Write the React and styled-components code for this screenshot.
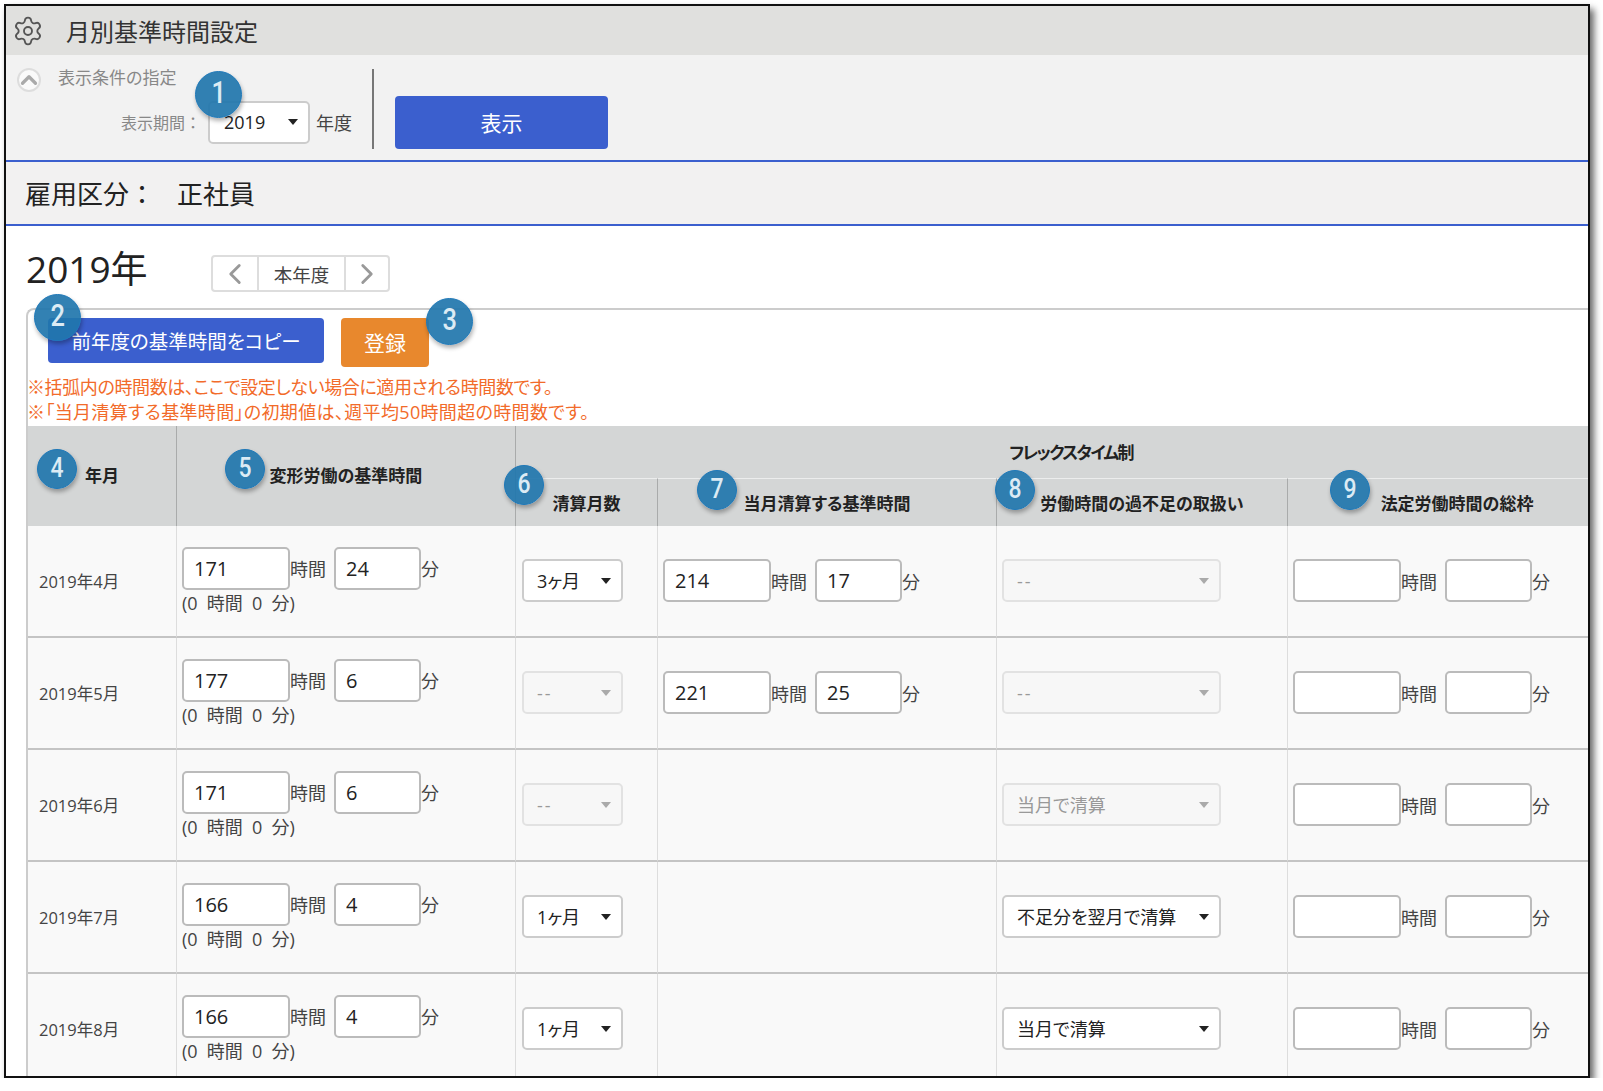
import React from 'react'
import styled, { createGlobalStyle } from 'styled-components'
import { Settings, ChevronUp, ChevronLeft, ChevronRight } from 'lucide-react'

const rows = [
  { month: '2019年4月', hour: '171', min: '24', settle: '3ヶ月', flexHour: '214', flexMin: '17', handling: '--', handlingOff: true },
  { month: '2019年5月', hour: '177', min: '6', settle: '--', settleOff: true, flexHour: '221', flexMin: '25', handling: '--', handlingOff: true },
  { month: '2019年6月', hour: '171', min: '6', settle: '--', settleOff: true, handling: '当月で清算', handlingOff: true },
  { month: '2019年7月', hour: '166', min: '4', settle: '1ヶ月', handling: '不足分を翌月で清算' },
  { month: '2019年8月', hour: '166', min: '4', settle: '1ヶ月', handling: '当月で清算' },
]

const GlobalStyle = createGlobalStyle`
  body {
    margin: 0;
    background: #fff;
    color: #333;
    font-family: "Open Sans", "Noto Sans CJK JP", sans-serif;
    font-feature-settings: "palt";
  }
`

const Frame = styled.div`
  box-sizing: border-box;
  width: 1586px;
  height: 1074px;
  margin: 4px 0 0 4px;
  border: 2px solid #111;
  background: #fff;
  overflow: hidden;
  box-shadow: 4px 5px 7px rgba(0, 0, 0, 0.6);
`

const TitleBar = styled.header`
  height: 49px;
  display: flex;
  align-items: center;
  padding-left: 6px;
  background: #e0e0de;
  color: #555;
`

const Title = styled.h1`
  margin: 0 0 0 22px;
  font-size: 24px;
  font-weight: 400;
  color: #333;
`

const FilterBar = styled.section`
  box-sizing: border-box;
  height: 106.5px;
  display: flex;
  align-items: flex-end;
  padding-bottom: 11px;
  background: #f2f2f2;
  border-bottom: 2px solid #3b5fce;
`

const FilterLeft = styled.div`
  box-sizing: border-box;
  width: 366px;
  height: 82px;
  padding: 0 0 5px 11px;
  display: flex;
  flex-direction: column;
  justify-content: space-between;
`

const Collapse = styled.div`
  display: flex;
  align-items: flex-start;
  gap: 17px;
  color: #888;
  font-size: 17px;
  line-height: 22px;
`

const CollapseCircle = styled.span`
  box-sizing: border-box;
  width: 24px;
  height: 24px;
  margin-top: 1px;
  display: flex;
  align-items: center;
  justify-content: center;
  border: 2px solid #ddd;
  border-radius: 50%;
  background: #fafafa;
  color: #aaa;

  svg {
    flex-shrink: 0;
  }
`

const PeriodRow = styled.div`
  display: flex;
  align-items: center;
  padding-left: 104px;
`

const PeriodLabel = styled.span`
  width: 87px;
  font-size: 16px;
  font-feature-settings: normal;
  color: #888;
`

const Unit = styled.span`
  margin-left: 6px;
  font-size: 18px;
  color: #444;
`

const Divider = styled.div`
  width: 2px;
  height: 80px;
  background: #777;
`

const Button = styled.button`
  box-sizing: border-box;
  width: ${p => p.$w}px;
  height: ${p => p.$h}px;
  margin-left: ${p => p.$ml || 0}px;
  padding: 0;
  border: 0;
  border-radius: 4px;
  background: ${p => p.$bg};
  color: #fff;
  font-family: inherit;
  font-feature-settings: inherit;
  font-size: ${p => p.$size}px;
`

const Section = styled.section`
  box-sizing: border-box;
  height: 64px;
  display: flex;
  align-items: center;
  gap: 22px;
  padding-left: 19px;
  background: #f2f1f1;
  border-bottom: 2px solid #3b5fce;
  font-size: 26px;
  font-feature-settings: normal;
  color: #222;
`

const YearRow = styled.div`
  height: 82px;
  display: flex;
  align-items: center;
  padding-left: 20px;
`

const Year = styled.h2`
  width: 185px;
  margin: 0;
  font-size: 37px;
  font-weight: 400;
  color: #222;
`

const YearNav = styled.div`
  box-sizing: border-box;
  height: 37px;
  margin-top: 14px;
  display: flex;
  border: 2px solid #ddd;
  border-radius: 4px;
  background: #fff;
`

const NavCell = styled.div`
  box-sizing: border-box;
  width: ${p => p.$w}px;
  display: flex;
  align-items: center;
  justify-content: center;
  border-left: ${p => (p.$line ? '2px solid #ddd' : '0')};
  font-size: 18.5px;
  color: ${p => (p.$text ? '#444' : '#999')};

  svg {
    flex-shrink: 0;
  }
`

const Panel = styled.div`
  width: 1601px;
  margin-left: 20px;
  border-top: 2px solid #ccc;
  border-left: 2px solid #ccc;
  border-top-left-radius: 8px;
`

const Actions = styled.div`
  display: flex;
  align-items: flex-start;
  gap: 17px;
  padding: 8px 0 0 20px;
`

const Anchor = styled.div`
  position: relative;
  display: inline-flex;
`

const Notes = styled.div`
  margin: 8px 0 0 -1px;
  color: #f26b2a;
  font-size: 18px;
  line-height: 25.5px;
`

const NoteLine = styled.div`
  letter-spacing: ${p => p.$sp}px;
`

const Table = styled.table`
  width: 1599px;
  table-layout: fixed;
  border-collapse: separate;
  border-spacing: 0;
`

const HeadCell = styled.th`
  position: relative;
  box-sizing: border-box;
  padding: 0 0 ${p => p.$pb || 0}px;
  height: ${p => p.$h || 48}px;
  background: #d4d6d6;
  border-right: 1px solid #a9abab;
  border-top: ${p => (p.$sub ? '1px solid #eceded' : '0')};
  color: #222;
  font-size: 17px;
  font-weight: 700;
  letter-spacing: ${p => p.$sp || 0}px;
  text-align: center;
`

const Cell = styled.td`
  box-sizing: border-box;
  height: 112px;
  padding: ${p => p.$top || 0}px 0 0 ${p => p.$left || 5}px;
  background: #f9f9f9;
  border-right: 1px solid #ddd;
  border-bottom: 2px solid #c4c4c4;
  font-size: 18px;
  color: #444;
`

const MonthCell = styled(Cell)`
  padding-left: 11px;
  font-size: 16.5px;
`

const TimeRow = styled.div`
  display: flex;
  align-items: center;
`

const TimeInput = styled.input`
  box-sizing: border-box;
  width: ${p => p.$w}px;
  height: 43px;
  padding: 0 0 0 10px;
  border: 2px solid #bbb;
  border-radius: 5px;
  background: #fff;
  color: #222;
  font-family: inherit;
  font-size: 20px;
  outline: none;
`

const TimeUnit = styled.span`
  margin-right: ${p => p.$mr || 0}px;
`

const DefaultTime = styled.div`
  line-height: 26px;
  word-spacing: 4.5px;
`

const SelectBox = styled.div`
  position: relative;
  box-sizing: border-box;
  width: ${p => p.$w}px;
  height: 43px;
  border: 2px solid ${p => (p.$off ? '#e2e2e2' : '#ccc')};
  border-radius: 5px;
  background: ${p => (p.$off ? '#f7f7f7' : '#fff')};

  &::after {
    content: '';
    position: absolute;
    right: 10px;
    top: 50%;
    margin-top: -3px;
    border-left: 5px solid transparent;
    border-right: 5px solid transparent;
    border-top: 6px solid ${p => (p.$off ? '#aaa' : '#222')};
  }
`

const SelectControl = styled.select`
  width: 100%;
  height: 100%;
  padding: 0 0 0 ${p => p.$pad || 13}px;
  border: 0;
  background: transparent;
  appearance: none;
  color: ${p => (p.disabled ? '#999' : '#222')};
  opacity: 1;
  font-family: inherit;
  font-feature-settings: inherit;
  font-size: 18px;
  letter-spacing: ${p => (p.$dash ? 2 : 0)}px;
  outline: none;
`

const Badge = styled.span`
  position: absolute;
  left: ${p => p.$x}px;
  top: ${p => p.$y}px;
  z-index: 2;
  box-sizing: border-box;
  width: ${p => p.$d || 40}px;
  height: ${p => p.$d || 40}px;
  display: flex;
  align-items: center;
  justify-content: center;
  padding-bottom: ${p => (p.$d ? 4 : 2)}px;
  border: 1.5px solid #1e78b8;
  border-radius: 50%;
  background: rgba(33, 118, 172, 0.92);
  box-shadow: 1px 3px 4px rgba(0, 0, 0, 0.3);
  color: #dcebf4;
  font-family: Roboto, sans-serif;
  font-size: ${p => (p.$d ? 31 : 28)}px;
  font-weight: 500;
  letter-spacing: 0;
`

const Digit = styled.span`
  display: inline-block;
  transform: scaleX(0.82);
`

const Select = ({ value, off, w, pad }) => (
  <SelectBox $w={w} $off={off}>
    <SelectControl disabled={off} defaultValue={value} $pad={pad} $dash={value === '--'}>
      <option>{value}</option>
    </SelectControl>
  </SelectBox>
)

const Time = ({ hour, min }) => (
  <TimeRow>
    <TimeInput $w={108} defaultValue={hour} />
    <TimeUnit $mr={8}>時間</TimeUnit>
    <TimeInput $w={87} defaultValue={min} />
    <TimeUnit>分</TimeUnit>
  </TimeRow>
)

const App = () => {
  return (
    <Frame>
      <GlobalStyle />
      <TitleBar>
        <Settings size={32} strokeWidth={1.4} />
        <Title>月別基準時間設定</Title>
      </TitleBar>

      <FilterBar>
        <FilterLeft>
          <Collapse>
            <CollapseCircle><ChevronUp size={26} strokeWidth={3} /></CollapseCircle>
            表示条件の指定
          </Collapse>
          <PeriodRow>
            <PeriodLabel>表示期間：</PeriodLabel>
            <Anchor>
              <Badge $x={-13} $y={-30} $d={47}><Digit>1</Digit></Badge>
              <Select value="2019" w={102} pad={14} />
            </Anchor>
            <Unit>年度</Unit>
          </PeriodRow>
        </FilterLeft>
        <Divider />
        <Button $w={213} $h={53} $ml={21} $bg="#3b5fce" $size={21}>表示</Button>
      </FilterBar>

      <Section>
        <span>雇用区分：</span>
        <span>正社員</span>
      </Section>

      <YearRow>
        <Year>2019年</Year>
        <YearNav>
          <NavCell $w={44}><ChevronLeft size={34} strokeWidth={2} /></NavCell>
          <NavCell $w={87} $line $text>本年度</NavCell>
          <NavCell $w={44} $line><ChevronRight size={34} strokeWidth={2} /></NavCell>
        </YearNav>
      </YearRow>

      <Panel>
        <Actions>
          <Anchor>
            <Badge $x={-14} $y={-24} $d={47}><Digit>2</Digit></Badge>
            <Button $w={276} $h={45} $bg="#3b5fce" $size={19.5}>前年度の基準時間をコピー</Button>
          </Anchor>
          <Anchor>
            <Button $w={88} $h={49} $bg="#e8882d" $size={21}>登録</Button>
            <Badge $x={85} $y={-20} $d={47}><Digit>3</Digit></Badge>
          </Anchor>
        </Actions>

        <Notes>
          <NoteLine $sp={-0.38}>※括弧内の時間数は、ここで設定しない場合に適用される時間数です。</NoteLine>
          <NoteLine $sp={0.34}>※「当月清算する基準時間」の初期値は、週平均50時間超の時間数です。</NoteLine>
        </Notes>

        <Table>
          <colgroup>
            <col width="149" />
            <col width="339" />
            <col width="142" />
            <col width="339" />
            <col width="291" />
            <col width="339" />
          </colgroup>
          <thead>
            <tr>
              <HeadCell rowSpan={2} $h={52} $pb={3}>
                <Badge $x={9} $y={23}><Digit>4</Digit></Badge>
                年月
              </HeadCell>
              <HeadCell rowSpan={2} $h={52} $pb={3}>
                <Badge $x={48} $y={23}><Digit>5</Digit></Badge>
                変形労働の基準時間
              </HeadCell>
              <HeadCell colSpan={4} $h={52} $sp={-1.7}>フレックスタイム制</HeadCell>
            </tr>
            <tr>
              <HeadCell $sub>
                <Badge $x={-12} $y={-14}><Digit>6</Digit></Badge>
                清算月数
              </HeadCell>
              <HeadCell $sub>
                <Badge $x={39} $y={-9}><Digit>7</Digit></Badge>
                当月清算する基準時間
              </HeadCell>
              <HeadCell $sub>
                <Badge $x={-2} $y={-9}><Digit>8</Digit></Badge>
                労働時間の過不足の取扱い
              </HeadCell>
              <HeadCell $sub>
                <Badge $x={42} $y={-9}><Digit>9</Digit></Badge>
                法定労働時間の総枠
              </HeadCell>
            </tr>
          </thead>
          <tbody>
            {rows.map(row => (
              <tr key={row.month}>
                <MonthCell>{row.month}</MonthCell>
                <Cell $top={1}>
                  <Time hour={row.hour} min={row.min} />
                  <DefaultTime>(0 時間 0 分)</DefaultTime>
                </Cell>
                <Cell $left={6}><Select value={row.settle} off={row.settleOff} w={101} /></Cell>
                <Cell>{row.flexHour && <Time hour={row.flexHour} min={row.flexMin} />}</Cell>
                <Cell><Select value={row.handling} off={row.handlingOff} w={219} /></Cell>
                <Cell><Time /></Cell>
              </tr>
            ))}
          </tbody>
        </Table>
      </Panel>
    </Frame>
  )
}

export default App
